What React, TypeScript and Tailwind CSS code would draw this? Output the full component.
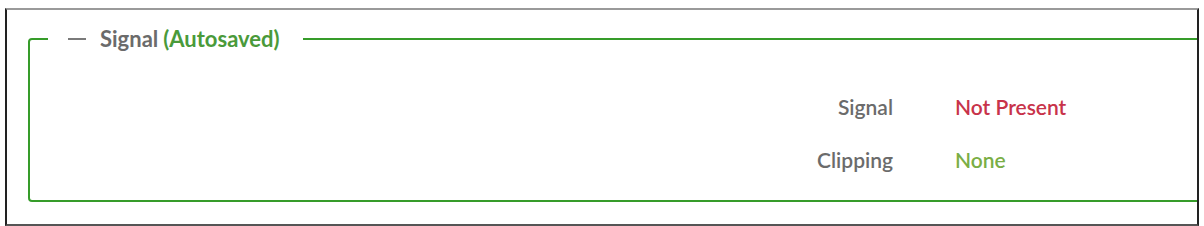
export default function App() {
  return (
    <div className="h-[226px] w-[1204px] overflow-hidden bg-white pl-[5px] pt-[8px] font-['Lato',_'Open_Sans',_sans-serif]">
      <div className="h-[218px] w-[1194px] overflow-hidden border-2 border-l-[#222] border-r-[#222] border-t-[#9a9a9a] border-b-[#555] pl-[21px] pt-[18px]">
        <fieldset className="h-[174px] w-[1200px] rounded-sm border-2 border-[#369c2a] pl-[18px]">
          <legend className="flex items-center pl-[20px] pr-[23px] text-[22px] font-bold leading-none">
            <span className="mr-[14px] h-[2px] w-[18px] bg-[#7a7a7a]" />
            <span className="text-[#6b6b6b]">Signal</span>
            <span className="ml-[5px] text-[#4a9a3a]">(Autosaved)</span>
          </legend>
          <div className="ml-[685px] mt-[45px] grid w-[360px] grid-cols-[160px_1fr] gap-x-[62px] gap-y-[29px] text-[21px] font-semibold leading-6">
            <div className="text-right text-[#6b6b6b]">Signal</div>
            <div className="text-[#c8334a]">Not Present</div>
            <div className="text-right text-[#6b6b6b]">Clipping</div>
            <div className="text-[#7aae45]">None</div>
          </div>
        </fieldset>
      </div>
    </div>
  );
}
